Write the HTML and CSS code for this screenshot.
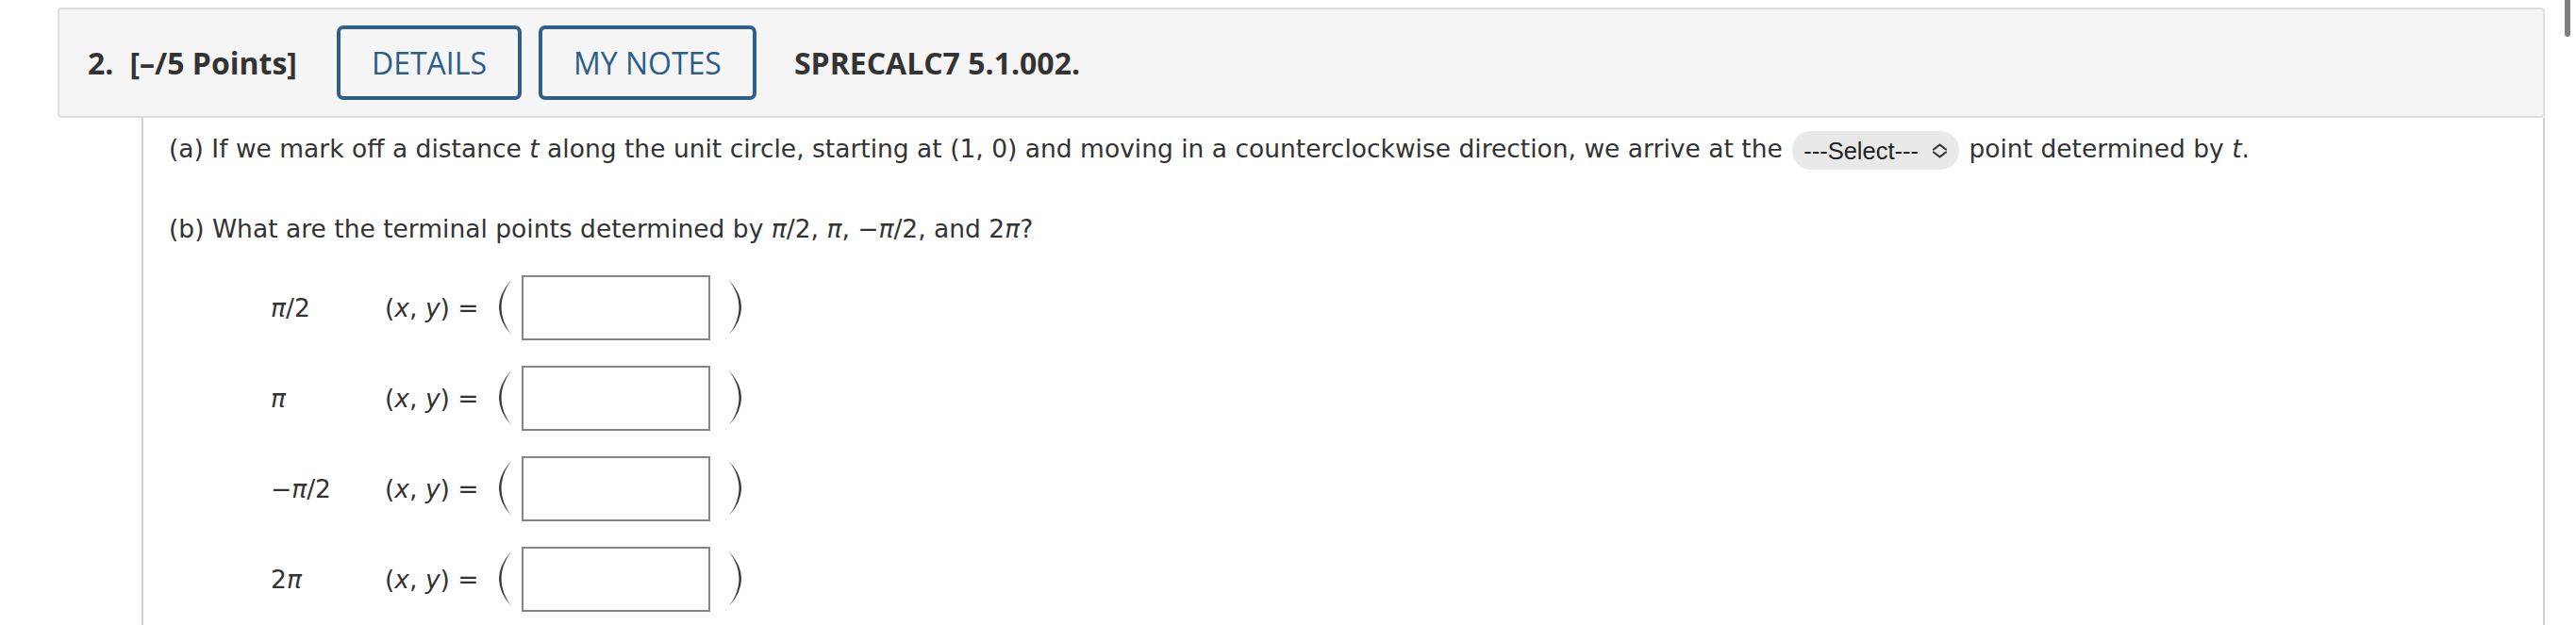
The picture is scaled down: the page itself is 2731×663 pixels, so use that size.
FILE: index.html
```html
<!DOCTYPE html>
<html lang="en">
<head>
<meta charset="UTF-8">
<title>Question 2</title>
<link rel="stylesheet" href="styles.css">
</head>
<body>
    <div class="scroll-thumb"></div>

    <div class="question">
        <div class="q-header">
            <span class="q-num">2.</span>
            <span class="q-points">[&ndash;/5 Points]</span>
            <button class="q-btn">DETAILS</button>
            <button class="q-btn">MY NOTES</button>
            <span class="q-code">SPRECALC7 5.1.002.</span>
        </div>

        <div class="q-body">
            <p class="part">(a) If we mark off a distance <i>t</i> along the unit circle, starting at (1, 0) and moving in a counterclockwise direction, we arrive at the
                <span class="select">---Select---
                    <svg class="chev" viewBox="0 0 17 16"><polyline points="2,6.5 8.5,1.5 15,6.5"/><polyline points="2,9.5 8.5,14.5 15,9.5"/></svg>
                </span>
                point determined by <i>t</i>.</p>

            <p class="part">(b) What are the terminal points determined by <i>&pi;</i>/2, <i>&pi;</i>, &minus;<i>&pi;</i>/2, and 2<i>&pi;</i>?</p>

            <div class="answers">
                <div class="answer-row">
                    <span class="label"><i>&pi;</i>/2</span>
                    <span class="xy">(<i>x</i>, <i>y</i>) =</span>
                    <svg class="paren" viewBox="0 0 16 58"><path d="M14 0 Q-12 29 14 58 Q-7 29 14 0 Z"/></svg>
                    <span class="box"></span>
                    <svg class="paren right" viewBox="0 0 16 58"><path d="M2 0 Q28 29 2 58 Q23 29 2 0 Z"/></svg>
                </div>
                <div class="answer-row">
                    <span class="label"><i>&pi;</i></span>
                    <span class="xy">(<i>x</i>, <i>y</i>) =</span>
                    <svg class="paren" viewBox="0 0 16 58"><path d="M14 0 Q-12 29 14 58 Q-7 29 14 0 Z"/></svg>
                    <span class="box"></span>
                    <svg class="paren right" viewBox="0 0 16 58"><path d="M2 0 Q28 29 2 58 Q23 29 2 0 Z"/></svg>
                </div>
                <div class="answer-row">
                    <span class="label">&minus;<i>&pi;</i>/2</span>
                    <span class="xy">(<i>x</i>, <i>y</i>) =</span>
                    <svg class="paren" viewBox="0 0 16 58"><path d="M14 0 Q-12 29 14 58 Q-7 29 14 0 Z"/></svg>
                    <span class="box"></span>
                    <svg class="paren right" viewBox="0 0 16 58"><path d="M2 0 Q28 29 2 58 Q23 29 2 0 Z"/></svg>
                </div>
                <div class="answer-row">
                    <span class="label">2<i>&pi;</i></span>
                    <span class="xy">(<i>x</i>, <i>y</i>) =</span>
                    <svg class="paren" viewBox="0 0 16 58"><path d="M14 0 Q-12 29 14 58 Q-7 29 14 0 Z"/></svg>
                    <span class="box"></span>
                    <svg class="paren right" viewBox="0 0 16 58"><path d="M2 0 Q28 29 2 58 Q23 29 2 0 Z"/></svg>
                </div>
            </div>
        </div>
    </div>
</body>
</html>
```

FILE: styles.css
```css
body {
    margin: 0;
    padding: 0;
    background-color: #fff;
    color: #333;
    font-family: "DejaVu Sans", Verdana, sans-serif;
    overflow: hidden;
}

.scroll-thumb {
    position: absolute;
    top: 0;
    left: 2719px;
    width: 6px;
    height: 39px;
    background-color: #7e7e7e;
    border-radius: 0 0 3px 3px;
}

.question {
    margin: 8px 0 0 61px;
    width: 2637px;
}

.q-header {
    display: flex;
    align-items: center;
    height: 113px;
    padding-left: 30px;
    background-color: #f5f5f5;
    border: 2px solid #dedede;
    border-radius: 4px;
    font-family: "Open Sans", sans-serif;
    font-size: 32px;
    color: #333;
}

.q-num {
    font-weight: 700;
    margin-right: 17px;
}

.q-points {
    font-weight: 700;
    margin-right: 42px;
}

.q-btn {
    height: 79px;
    padding: 0 33px;
    margin-right: 18px;
    background-color: transparent;
    border: 4px solid #2f5f8c;
    border-radius: 7px;
    color: #2d5d8b;
    font-family: "Open Sans", sans-serif;
    font-size: 32px;
}

.q-btn + .q-code {
    margin-left: 22px;
}

.q-code {
    font-weight: 700;
}

.q-body {
    margin-left: 89px;
    height: 560px;
    padding: 12px 0 0 27px;
    border-left: 2px solid #cfcfcf;
    border-right: 2px solid #cfcfcf;
    font-size: 26.5px;
}

.part {
    margin: 0 0 42px;
    line-height: 42px;
}

.select {
    display: inline-flex;
    align-items: center;
    height: 41px;
    padding: 0 12px;
    margin: 0 2px;
    vertical-align: middle;
    background-color: #e9e9e9;
    border-radius: 20px;
    font-family: "Liberation Sans", Arial, sans-serif;
    font-size: 25.5px;
    color: #222;
}

.chev {
    width: 17px;
    height: 16px;
    margin-left: 14px;
    fill: none;
    stroke: #333;
    stroke-width: 2.2;
    stroke-linecap: round;
    stroke-linejoin: round;
}

.answers {
    display: flex;
    flex-direction: column;
    gap: 26px;
    margin-top: -15px;
    padding-left: 108px;
}

.answer-row {
    display: flex;
    align-items: center;
    height: 70px;
}

.label {
    width: 121px;
}

.xy {
    width: 120px;
}

.paren {
    width: 16px;
    height: 58px;
    margin-right: 9px;
    fill: #3a3a3a;
}

.paren.right {
    margin: 0 0 0 18px;
}

.box {
    width: 196px;
    height: 65px;
    border: 2px solid #858585;
    background-color: #fff;
}
```
